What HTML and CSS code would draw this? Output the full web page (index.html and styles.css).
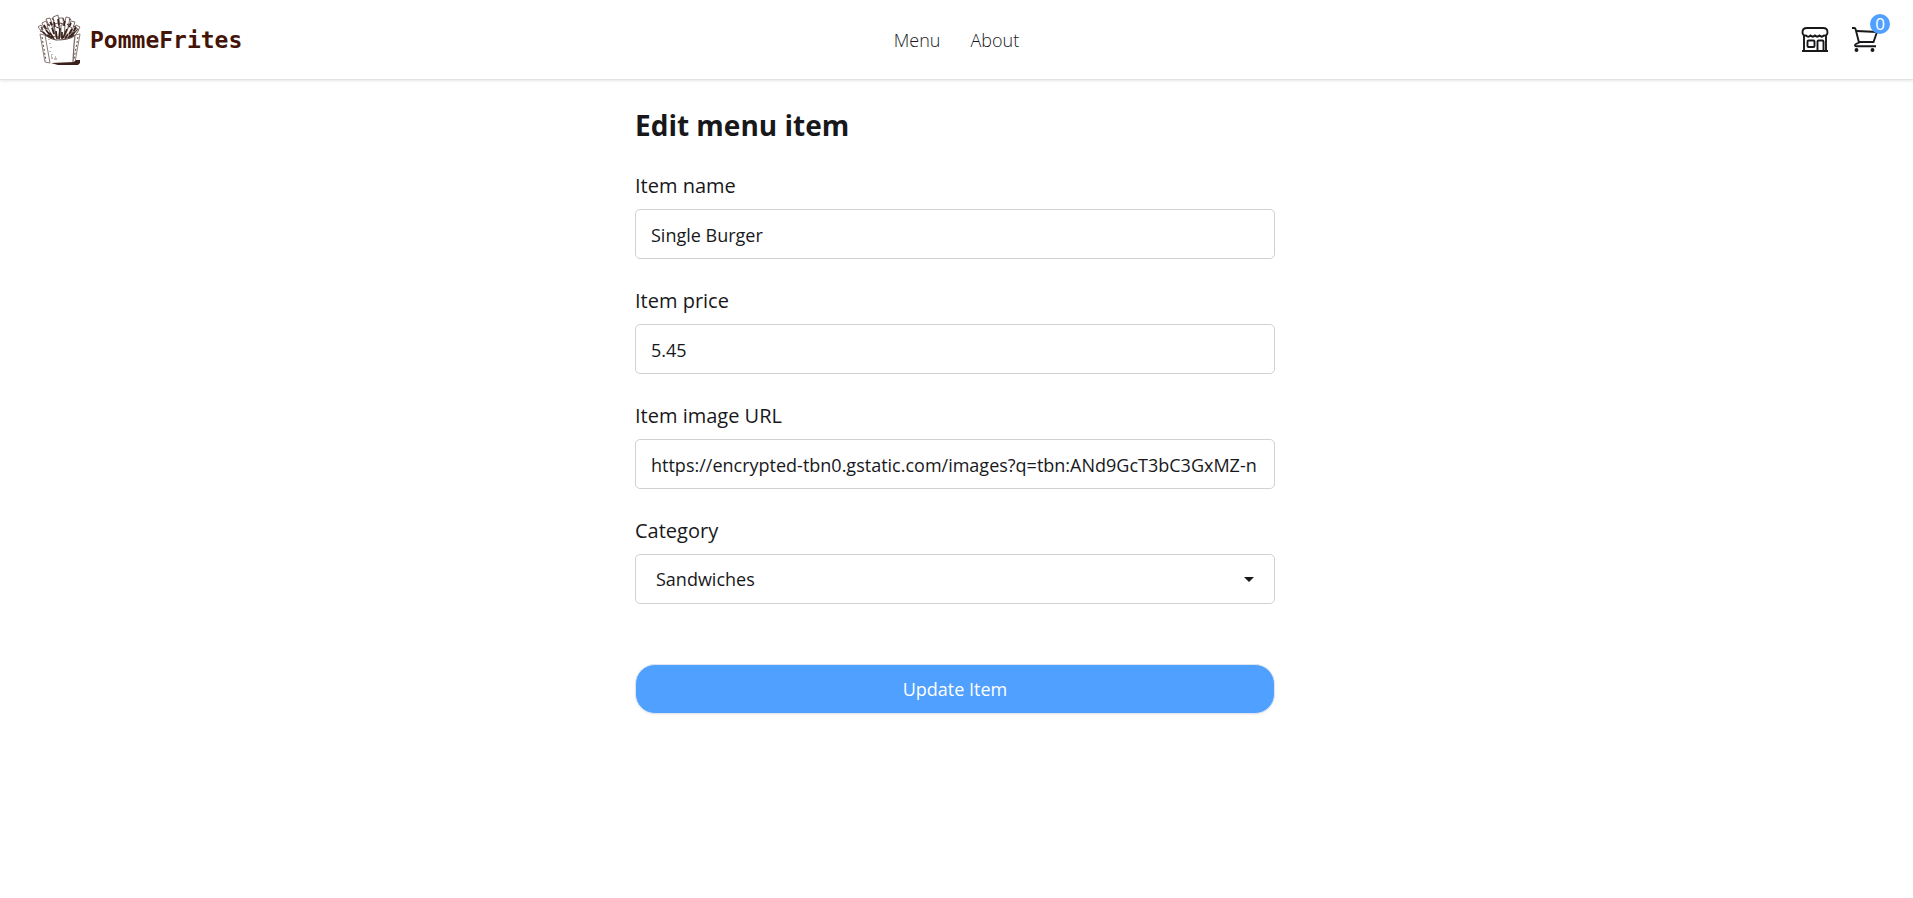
FILE: index.html
```html
<!DOCTYPE html>
<html lang="en">
<head>
<meta charset="utf-8">
<title>PommeFrites</title>
<link rel="stylesheet" href="styles.css">
</head>
<body>
<header class="header">
  <a class="brand" href="#">
    <svg class="brand-logo" viewBox="0 0 44 52" aria-hidden="true">
      <g fill="#fff" stroke="#7d6d69" stroke-width="1">
        <path d="M5 19L0 13l3-2 6 9zM8 18L4 9l4-2 5 12zM13 16L8 5l4-1 5 13zM17 15L15 3l5-2 2 15zM21 16L21 4l4 0 1 13zM25 16L28 3l4 1-3 14zM30 17L33 7l4 1-4 12zM34 20l4-9 4 2-5 9z"/>
        <path d="M9 23L3 15l3-2 7 10zM14 22L9 12l4-2 5 13zM18 23L16 10l4-1 3 14zM23 23L23 11l4 0-1 13zM27 22L31 12l3 2-4 10zM32 22l6-8 3 2-6 8z"/>
      </g>
      <path d="M5 18l6 6M8 16l4 5M12 19l4 6M14 14l2 6M18 17l1 8M22 14l-1 11M24 18v7M29 15l-4 9M30 20l-3 5M34 15l-3 5M37 18l-6 5M16 8l1 5M20 5l1 6M27 7l-1 5M12 8l2 3M33 9l-2 4M9 21l5 3M36 21l-6 3M6 11l2 4M38 13l-2 4" fill="none" stroke="#3b211b" stroke-width="1.700"/>
      <path d="M2 17l3 1M9 10l3 2M14 4l2 3M22 9l3 1M29 10l3 2M25 4l1 3M35 12l3 1M7 14l3 1M18 13l3 1M31 5l2 1M3 13l2 3M40 15l-3 3" fill="none" stroke="#5b4843" stroke-width="1.200"/>
      <path d="M2 20l5 1q4 3 7 4 8 2 15 0 5-1 8-4l5-1-6 28-3 1H11l-4-1z" fill="#fff"/>
      <path d="M2 20l5 28 5 1L7 21M2 20l5 1M37 21l5-1-5 28" fill="none" stroke="#8b7d79" stroke-width="1"/>
      <path d="M7 21q6 4 11 5 7 0 11-1 5-1 8-4" fill="none" stroke="#5b4843" stroke-width="1.200"/>
      <path d="M37 21l-1 10-1 17" fill="none" stroke="#7d6d69" stroke-width="1.300"/>
      <path d="M4 23l4 24M40 23l-4 22" fill="none" stroke="#5b4843" stroke-width="1" stroke-dasharray="2 2"/>
      <path d="M12 29v1M13 33v1M12 37v1M14 40v1M13 44h2M16 45h3M11 25v1M13 42h1M17 43h1" fill="none" stroke="#8b7d79" stroke-width="1"/>
      <path d="M13 49l23-1 2-2h4v3l-2 2H20z" fill="#3b211b"/>
    </svg>
    <span class="brand-name">PommeFrites</span>
  </a>
  <nav class="nav">
    <a class="nav-link" href="#">Menu</a>
    <a class="nav-link" href="#">About</a>
  </nav>
  <div class="actions">
    <a class="icon-link" href="#" aria-label="Store">
      <svg class="icon" viewBox="0 0 28 28" fill="none" stroke="#18181b" stroke-width="1.900" aria-hidden="true">
        <path d="M6 2h16c3 0 4.500 2 4.500 4.200S25 10.200 23 9.500c-1.500 1.500-3 1.500-4.500 0-1.500 1.500-3 1.500-4.500 0-1.500 1.500-3 1.500-4.500 0-1.500 1.500-3 1.500-4.500 0C3 10.200 1.500 8.400 1.500 6.200S3 2 6 2z"/>
        <path d="M1 25h26M3 9v16M25 9v16"/>
        <path d="M16.500 25V15.500q0-1 1-1h4q1 0 1 1V25"/>
        <rect x="6.500" y="14.500" width="7" height="6.500" rx="1"/>
      </svg>
    </a>
    <a class="icon-link" href="#" aria-label="Cart">
      <svg class="icon" viewBox="0 0 28 28" fill="none" stroke="#18181b" stroke-width="1.900" aria-hidden="true">
        <path d="M1 2h2.300q1 0 1.300 1.200L8 16.500 5 18q-1 .6-1 1.300 0 1 1.300 1H25"/>
        <path d="M5.500 5L26 6l-3.500 10H8"/>
        <circle cx="5.500" cy="24" r="1" fill="#18181b"/>
        <circle cx="21.500" cy="24" r="1" fill="#18181b"/>
      </svg>
      <span class="badge">0</span>
    </a>
  </div>
</header>
<main class="main">
  <form class="form">
    <h1 class="title">Edit menu item</h1>
    <div class="field">
      <label class="label" for="name">Item name</label>
      <input class="control" id="name" type="text" value="Single Burger">
    </div>
    <div class="field">
      <label class="label" for="price">Item price</label>
      <input class="control" id="price" type="text" value="5.45">
    </div>
    <div class="field">
      <label class="label" for="image">Item image URL</label>
      <input class="control" id="image" type="text" value="https://encrypted-tbn0.gstatic.com/images?q=tbn:ANd9GcT3bC3GxMZ-n">
    </div>
    <div class="field">
      <label class="label" for="category">Category</label>
      <div class="select-wrap">
        <select class="control select" id="category"><option>Sandwiches</option></select>
        <svg class="caret" viewBox="0 0 10 5" aria-hidden="true"><path d="M0 0h10L5 5z" fill="#18181b"/></svg>
      </div>
    </div>
    <button class="submit" type="button">Update Item</button>
  </form>
</main>
</body>
</html>
```

FILE: styles.css
```css
* {
  box-sizing: border-box;
}

body {
  margin: 0;
  background: #fff;
  color: #18181b;
  font-family: "Open Sans", "Noto Sans", sans-serif;
}

.header {
  display: grid;
  grid-template-columns: 1fr auto 1fr;
  align-items: center;
  height: 80px;
  padding: 0 34px;
  border-bottom: 1px solid #e2e2e3;
  box-shadow: 0 1px 3px rgba(0, 0, 0, 0.1);
}

.brand {
  display: flex;
  align-items: center;
  gap: 8px;
  padding-left: 4px;
  color: #431407;
  text-decoration: none;
}

.brand-logo {
  width: 44px;
  height: 52px;
}

.brand-name {
  font: bold 23px "DejaVu Sans Mono", monospace;
}

.nav {
  display: flex;
  gap: 30px;
}

.nav-link {
  color: inherit;
  font-size: 18px;
  font-weight: 300;
  text-decoration: none;
}

.actions {
  display: flex;
  justify-content: flex-end;
  gap: 22px;
}

.icon-link {
  position: relative;
  display: flex;
}

.icon {
  width: 28px;
  height: 28px;
}

.badge {
  position: absolute;
  top: -12px;
  right: -11px;
  width: 20px;
  height: 20px;
  border-radius: 50%;
  background: #50a0ff;
  color: #fff;
  font-size: 17px;
  line-height: 20px;
  text-align: center;
}

.main {
  padding: 28px 19px 28px 16px;
}

.form {
  display: flex;
  flex-direction: column;
  gap: 28px;
  max-width: 640px;
  margin: 0 auto;
}

.title {
  margin: 0 0 2px;
  font-size: 28px;
  line-height: 34px;
}

.field {
  display: flex;
  flex-direction: column;
  gap: 10px;
}

.label {
  font-size: 20px;
  line-height: 27px;
}

.control {
  width: 100%;
  height: 50px;
  padding: 2px 15px 0;
  border: 1px solid #d1d1d1;
  border-radius: 5px;
  background: #fff;
  color: inherit;
  font: 500 18px "Open Sans", "Noto Sans", sans-serif;
}

.select-wrap {
  position: relative;
}

.select {
  display: block;
  padding: 0 20px;
  appearance: none;
}

.caret {
  position: absolute;
  top: 23px;
  right: 21px;
  width: 10px;
  height: 5px;
  pointer-events: none;
}

.submit {
  height: 50px;
  margin-top: 32px;
  border: 1px solid #dfe6ee;
  border-radius: 20px;
  background: #50a0ff;
  box-shadow: 0 1px 2px rgba(0, 0, 0, 0.05);
  color: #fff;
  font: 500 18px "Open Sans", "Noto Sans", sans-serif;
}
```
